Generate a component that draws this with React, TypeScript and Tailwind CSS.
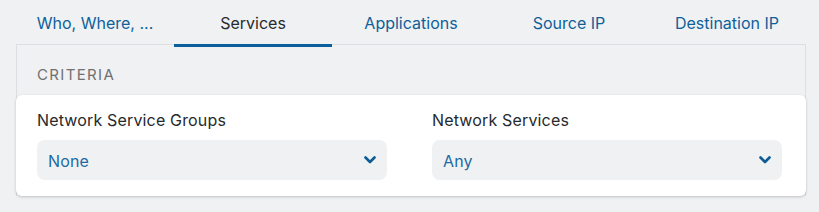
import React from "react";

const tabs = ["Who, Where, ...", "Services", "Applications", "Source IP", "Destination IP"];

function Chevron() {
  return (
    <svg width="12" height="8" viewBox="0 0 12 8" fill="none">
      <path d="M1.5 1.5 L6 6 L10.5 1.5" stroke="#0b5c94" strokeWidth="2.6" strokeLinecap="round" strokeLinejoin="round" />
    </svg>
  );
}

function Field({ label, value }: { label: string; value: string }) {
  return (
    <div className="flex flex-col">
      <div className="text-[16px] leading-[20px] tracking-[0.01em] text-[#262a2e] mt-[15px]">{label}</div>
      <div className="mt-[10px] h-[40px] rounded-[8px] bg-[#f0f1f3] flex items-center justify-between pl-[11px] pr-[11px]">
        <span className="text-[16px] tracking-[0.01em] text-[#1e6aa3] mt-px">{value}</span>
        <Chevron />
      </div>
    </div>
  );
}

export default function App() {
  return (
    <div className="w-[819px] h-[212px] bg-[#f0f1f3] overflow-hidden" style={{ fontFamily: "Inter, 'Noto Sans', sans-serif" }}>
      <div className="ml-[16px] w-[790px]">
        <div className="flex h-[47px]">
          {tabs.map((t, i) => (
            <div
              key={t}
              className={
                "w-[158px] flex items-start justify-center pt-[11px] text-[16px] leading-[24px] " +
                (i === 1 ? "text-[#262a2e] border-b-[3px] border-[#0b5f9c]" : "text-[#0e5f9a]")
              }
            >
              {t}
            </div>
          ))}
        </div>
        <div className="border-l border-t border-r border-[#dcdee1] -mt-[3px]">
          <div className="pl-[20px] pt-[20px] h-[50px] text-[15px] tracking-[0.09em] text-[#707070] leading-[20px]">CRITERIA</div>
          <div className="-mx-px bg-white rounded-[6px] shadow-[0_1px_3px_rgba(0,0,0,0.2)] h-[101px] pl-[21px] pr-[24px] grid grid-cols-2 gap-x-[45px]">
            <Field label="Network Service Groups" value="None" />
            <Field label="Network Services" value="Any" />
          </div>
        </div>
      </div>
    </div>
  );
}
